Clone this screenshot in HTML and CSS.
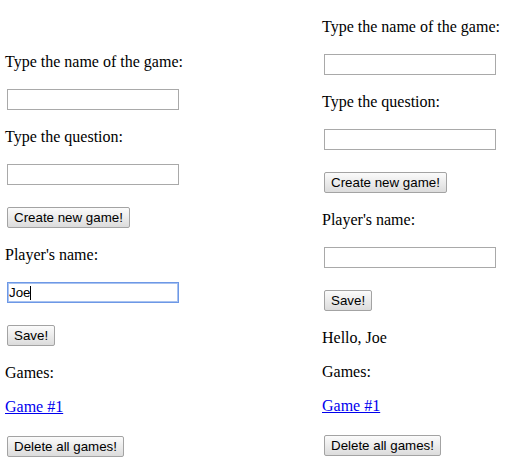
FILE: index.html
```html
<!DOCTYPE html>
<html>
<head>
<meta charset="utf-8">
<link rel="stylesheet" href="styles.css">
</head>
<body>
<div class="wrap">
  <div class="col col-left">
    <p class="line">Type the name of the game:</p>
    <p class="field-row"><input class="field" type="text"></p>
    <p class="line">Type the question:</p>
    <p class="field-row"><input class="field" type="text"></p>
    <p class="btn-row"><button class="btn">Create new game!</button></p>
    <p class="line">Player's name:</p>
    <p class="field-row"><span class="caret-wrap"><input class="field focused" type="text" value="Joe"><span class="caret"></span></span></p>
    <p class="btn-row"><button class="btn">Save!</button></p>
    <p class="line">Games:</p>
    <p class="line"><a class="link" href="#">Game #1</a></p>
    <p class="btn-row"><button class="btn">Delete all games!</button></p>
  </div>
  <div class="col col-right">
    <p class="line">Type the name of the game:</p>
    <p class="field-row"><input class="field" type="text"></p>
    <p class="line">Type the question:</p>
    <p class="field-row"><input class="field" type="text"></p>
    <p class="btn-row"><button class="btn">Create new game!</button></p>
    <p class="line">Player's name:</p>
    <p class="field-row"><input class="field" type="text"></p>
    <p class="btn-row"><button class="btn">Save!</button></p>
    <p class="line">Hello, Joe</p>
    <p class="line">Games:</p>
    <p class="line"><a class="link" href="#">Game #1</a></p>
    <p class="btn-row"><button class="btn">Delete all games!</button></p>
  </div>
</div>
</body>
</html>
```
FILE: styles.css
```css
html, body {
  margin: 0;
  padding: 0;
  background: #ffffff;
}
body {
  font-family: "Liberation Serif", "Times New Roman", serif;
  font-size: 16px;
  color: #000000;
}
.wrap {
  display: grid;
  grid-template-columns: 317px 1fr;
  align-items: start;
  padding: 2px 0 0 5px;
}
.col {
  display: flow-root;
}
.col-left {
  padding-top: 35px;
}
.col p {
  margin: 16px 0;
}
.line {
  height: 18px;
  line-height: 18px;
  white-space: nowrap;
}
.field-row {
  height: 25px;
  box-sizing: border-box;
  padding: 2px 0 0 2px;
}
.btn-row {
  height: 27px;
  box-sizing: border-box;
  padding: 4px 0 0 2px;
}
.field {
  display: block;
  box-sizing: border-box;
  width: 172px;
  height: 21px;
  margin: 0;
  padding: 1px 1px;
  border: 1px solid #a9a9a9;
  background: #ffffff;
  font-family: "Liberation Sans", Arial, sans-serif;
  font-size: 13.33px;
  color: #000000;
  outline: none;
}
.field.focused {
  border-color: #6d98e6;
  box-shadow: inset 0 0 0 1px #a8c2f0;
}
.caret-wrap {
  position: relative;
  display: block;
  width: 172px;
}
.caret {
  position: absolute;
  left: 23px;
  top: 4px;
  width: 1px;
  height: 14px;
  background: #000000;
}
.btn {
  display: block;
  box-sizing: border-box;
  height: 21px;
  margin: 0;
  padding: 1px 6px;
  border: 1px solid #a3a3a3;
  border-radius: 2px;
  background: linear-gradient(#fbfbfb, #dcdcdc);
  font-family: "Liberation Sans", Arial, sans-serif;
  font-size: 13.33px;
  color: #000000;
  line-height: 17px;
}
.link {
  color: #0000ee;
  text-decoration: underline;
}
```
